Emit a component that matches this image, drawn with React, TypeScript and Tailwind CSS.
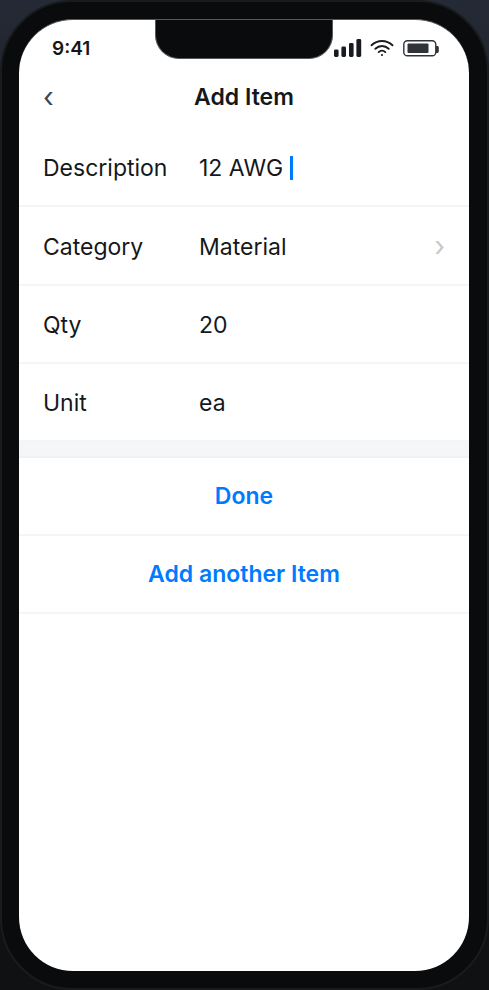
import { useState } from "react";
import type { ReactNode } from "react";

const inputClass =
  "bg-transparent p-0 text-[23px] leading-7 text-[#15181b] outline-none";

function SignalIcon() {
  return (
    <svg width="28" height="18" viewBox="0 0 28 18" fill="#181c20" aria-hidden="true">
      <rect x="0" y="10.5" width="4.6" height="7.5" rx="1.4" />
      <rect x="7.4" y="7.5" width="4.6" height="10.5" rx="1.4" />
      <rect x="15" y="4" width="4.6" height="14" rx="1.4" />
      <rect x="22.4" y="0" width="4.8" height="18" rx="1.4" />
    </svg>
  );
}

function WifiIcon() {
  return (
    <svg
      width="24"
      height="18"
      viewBox="0 0 24 18"
      fill="none"
      stroke="#181c20"
      strokeWidth="1.9"
      strokeLinecap="round"
      aria-hidden="true"
    >
      <path d="M1.5 6.3C7.5 .5 16.5 .5 22.5 6.3" />
      <path d="M5.3 9.8C9.2 6.1 14.8 6.1 18.7 9.8" />
      <path d="M8.7 13.1C10.6 11.3 13.4 11.3 15.3 13.1" />
      <circle cx="12" cy="16" r="1.1" fill="#181c20" stroke="none" />
    </svg>
  );
}

function BatteryIcon() {
  return (
    <svg width="37" height="18" viewBox="0 0 37 18" aria-hidden="true">
      <rect x="1.8" y="1.8" width="32" height="15" rx="3.6" fill="none" stroke="#303438" strokeWidth="1.4" />
      <rect x="5.5" y="4.5" width="21" height="9.5" rx="1" fill="#303438" />
      <path d="M34 7h1.4a1.4 1.4 0 0 1 1.4 1.4v4.2a1.4 1.4 0 0 1-1.4 1.4H34z" fill="#303438" />
    </svg>
  );
}

function Row({ id, label, children }: { id: string; label: string; children: ReactNode }) {
  return (
    <div className="flex min-h-[78px] items-center border-b-2 border-[#f4f5f6] px-6 pt-[25px] pb-[23px]">
      <label htmlFor={id} className="w-[156px] shrink-0">
        {label}
      </label>
      {children}
    </div>
  );
}

export default function App() {
  const [description, setDescription] = useState("12 AWG ");
  const [category, setCategory] = useState("Material");
  const [qty, setQty] = useState("20");
  const [unit, setUnit] = useState("ea");

  return (
    <div className="min-h-screen bg-linear-to-b from-[#252b36] via-[#101114] via-30% to-[#101113] font-['Inter',sans-serif] text-[23px] leading-7 text-[#15181b]">
      <div className="flex min-h-screen flex-col rounded-[72px] border-2 border-[#191b1d] bg-[#0a0b0d] pt-[17px] pr-[18px] pb-[17px] pl-[17px]">
        <main className="relative flex grow flex-col overflow-hidden rounded-[54px] border-t border-[#55585a] bg-white">
          {/* notch */}
          <div className="absolute top-0 left-1/2 h-[39px] w-[178px] -translate-x-1/2 rounded-b-3xl border border-t-0 border-[#55585a] bg-[#0a0b0d]" />

          <div className="flex h-14 items-center justify-between pt-0.5 pr-[30px] pl-[33px]">
            <span className="text-[19px] font-semibold">9:41</span>
            <div className="flex items-center gap-2 pb-0.5">
              <SignalIcon />
              <WifiIcon />
              <BatteryIcon />
            </div>
          </div>

          <header className="grid h-[42px] grid-cols-[1fr_auto_1fr] items-center px-6">
            <button type="button" aria-label="Back" className="justify-self-start text-[28px] text-[#3c4650]">
              ‹
            </button>
            <h1 className="font-semibold">Add Item</h1>
          </header>

          <form className="pt-[11px]" onSubmit={(e) => e.preventDefault()}>
            <Row id="description" label="Description">
              <input
                id="description"
                value={description}
                onChange={(e) => setDescription(e.target.value)}
                className={`${inputClass} field-sizing-content caret-transparent`}
              />
              <span className="h-6 w-[3px] bg-[#007aff]" />
            </Row>
            <Row id="category" label="Category">
              <select
                id="category"
                value={category}
                onChange={(e) => setCategory(e.target.value)}
                className={`${inputClass} min-w-0 grow appearance-none`}
              >
                <option>Material</option>
                <option>Labor</option>
              </select>
              <span className="text-[28px] leading-[29px] text-[#c5c9ce]" aria-hidden="true">
                ›
              </span>
            </Row>
            <Row id="qty" label="Qty">
              <input
                id="qty"
                inputMode="numeric"
                value={qty}
                onChange={(e) => setQty(e.target.value)}
                className={`${inputClass} min-w-0 grow`}
              />
            </Row>
            <Row id="unit" label="Unit">
              <input
                id="unit"
                value={unit}
                onChange={(e) => setUnit(e.target.value)}
                className={`${inputClass} min-w-0 grow`}
              />
            </Row>

            <div className="h-4 border-b-2 border-[#eff1f3] bg-[#f5f6f8]" />

            <button
              type="submit"
              className="block h-[78px] w-full border-b-2 border-[#f4f5f6] font-semibold text-[#007aff]"
            >
              Done
            </button>
            <button
              type="button"
              className="block h-[78px] w-full border-b-2 border-[#f4f5f6] font-semibold text-[#007aff]"
            >
              Add another Item
            </button>
          </form>
        </main>
      </div>
    </div>
  );
}
